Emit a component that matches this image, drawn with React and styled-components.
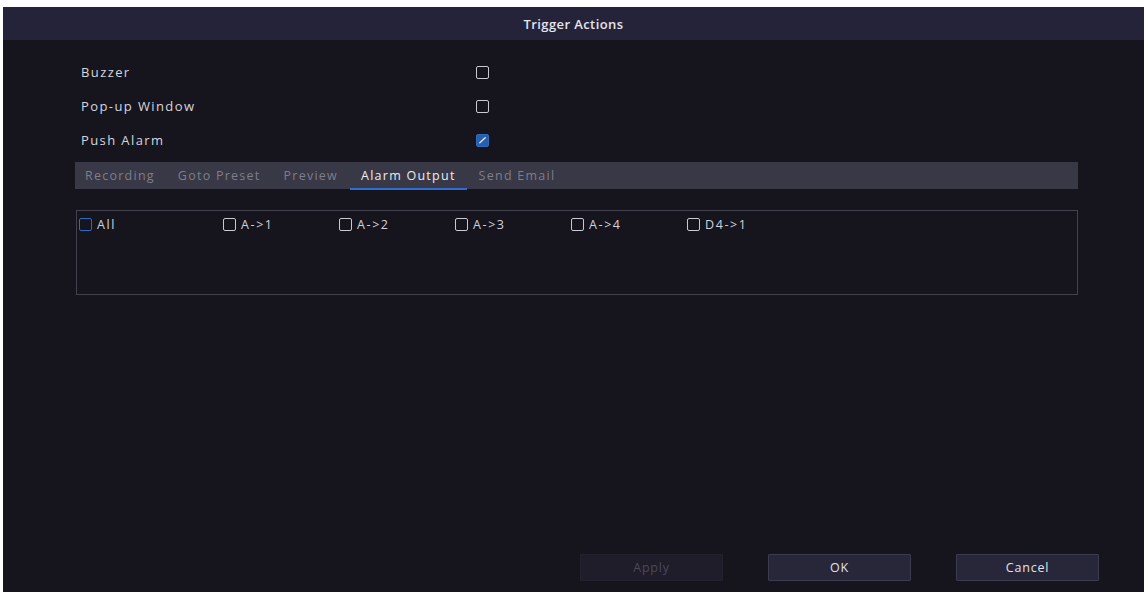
import React, { useState } from 'react';
import styled, { createGlobalStyle } from 'styled-components';

const GlobalStyle = createGlobalStyle`
  html, body {
    margin: 0;
    background: #ffffff;
  }
  * {
    box-sizing: border-box;
  }
`;

const Page = styled.div`
  width: 1148px;
  height: 595px;
  padding: 7px 4px 3px 3px;
  font-family: "Open Sans", "Noto Sans", sans-serif;
`;

const Panel = styled.div`
  height: 100%;
  background: #16151e;
  display: flex;
  flex-direction: column;
`;

const TitleBar = styled.div`
  height: 33px;
  flex-shrink: 0;
  background: #24233a;
  color: #e4e4ec;
  font-size: 13px;
  font-weight: 600;
  display: flex;
  align-items: center;
  justify-content: center;
  letter-spacing: 0.4px;
`;

const Body = styled.div`
  flex: 1;
  display: flex;
  flex-direction: column;
  padding: 15px 66px 0 72px;
`;

const OptionRow = styled.div`
  height: 34px;
  display: grid;
  grid-template-columns: 395px 1fr;
  align-items: center;
  padding-left: 6px;
`;

const OptionLabel = styled.span`
  color: #d6d6de;
  font-size: 13px;
  letter-spacing: 1.4px;
`;

const Box = styled.span`
  width: ${p => p.$size}px;
  height: ${p => p.$size}px;
  border-radius: 2px;
  border: 1.5px solid ${p => (p.$accent ? '#2c6bc4' : '#c9c9d2')};
  background: ${p => (p.$checked ? '#2a5ea8' : 'transparent')};
  display: inline-flex;
  align-items: center;
  justify-content: center;
  flex-shrink: 0;
`;

const Check = ({ size = 13, checked, accent }) => (
  <Box $size={size} $checked={checked} $accent={accent || checked}>
    {checked && (
      <svg width={size - 4} height={size - 4} viewBox="0 0 10 10">
        <path d="M2 7.5 L8 2" stroke="#d8e6f8" strokeWidth="1.6" strokeLinecap="round" />
      </svg>
    )}
  </Box>
);

const TabBar = styled.div`
  margin-top: 5px;
  height: 27px;
  background: #393846;
  display: flex;
  align-items: stretch;
  padding-left: 0;
`;

const Tab = styled.div`
  padding: 0 11.5px;
  display: flex;
  align-items: center;
  font-size: 12.5px;
  letter-spacing: 1.25px;
  color: ${p => (p.$active ? '#ececf2' : '#7e7d8a')};
  border-bottom: 2px solid ${p => (p.$active ? '#2f6ed0' : 'transparent')};
  margin-bottom: -1px;
  cursor: pointer;

  &:first-child {
    padding-left: 10px;
  }
`;

const OutputBox = styled.div`
  margin-top: 21px;
  margin-left: 1px;
  height: 85px;
  border: 1px solid #42414e;
  padding: 5px 0 0 2px;
`;

const OutputGrid = styled.div`
  display: grid;
  grid-template-columns: 144px repeat(5, 116px);
`;

const OutputItem = styled.label`
  display: flex;
  align-items: center;
  gap: 5px;
  color: #d2d2da;
  font-size: 12.5px;
  letter-spacing: 1.6px;
  height: 16px;
`;

const Footer = styled.div`
  margin-top: auto;
  display: flex;
  justify-content: flex-end;
  gap: 45px;
  padding: 0 45px 11px 0;
`;

const Button = styled.button`
  width: 143px;
  height: 27px;
  font-family: inherit;
  font-size: 12.5px;
  letter-spacing: 0.8px;
  border: 1px solid ${p => (p.disabled ? '#23222f' : '#3c3b4e')};
  background: ${p => (p.disabled ? '#1e1d29' : '#28273a')};
  color: ${p => (p.disabled ? '#4a495c' : '#e2e2ea')};
  border-radius: 1px;
`;

const tabs = ['Recording', 'Goto Preset', 'Preview', 'Alarm Output', 'Send Email'];
const outputs = ['All', 'A->1', 'A->2', 'A->3', 'A->4', 'D4->1'];

export default function App() {
  const [activeTab, setActiveTab] = useState('Alarm Output');

  return (
    <Page>
      <GlobalStyle />
      <Panel>
        <TitleBar>Trigger Actions</TitleBar>
        <Body>
          <OptionRow>
            <OptionLabel>Buzzer</OptionLabel>
            <Check />
          </OptionRow>
          <OptionRow>
            <OptionLabel>Pop-up Window</OptionLabel>
            <Check />
          </OptionRow>
          <OptionRow>
            <OptionLabel>Push Alarm</OptionLabel>
            <Check checked />
          </OptionRow>

          <TabBar>
            {tabs.map(t => (
              <Tab key={t} $active={t === activeTab} onClick={() => setActiveTab(t)}>
                {t}
              </Tab>
            ))}
          </TabBar>

          <OutputBox>
            <OutputGrid>
              {outputs.map(o => (
                <OutputItem key={o}>
                  <Check size={13} accent={o === 'All'} />
                  {o}
                </OutputItem>
              ))}
            </OutputGrid>
          </OutputBox>
        </Body>
        <Footer>
          <Button disabled>Apply</Button>
          <Button>OK</Button>
          <Button>Cancel</Button>
        </Footer>
      </Panel>
    </Page>
  );
}
